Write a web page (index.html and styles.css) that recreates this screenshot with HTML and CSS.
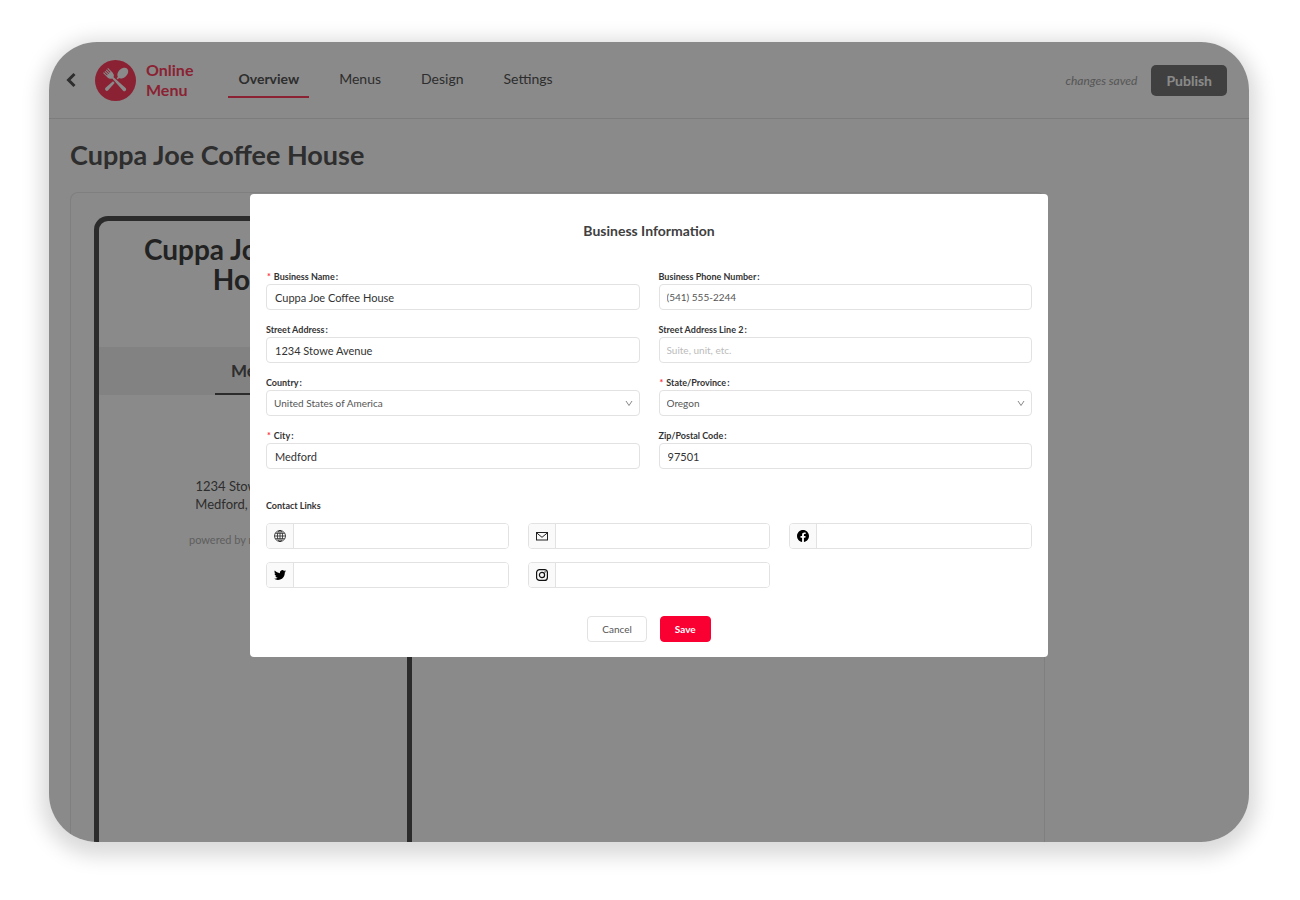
FILE: index.html
```html
<!DOCTYPE html>
<html lang="en">
<head>
  <meta charset="UTF-8">
  <meta name="viewport" content="width=device-width, initial-scale=1">
  <title>Online Menu - Cuppa Joe Coffee House</title>
  <link rel="stylesheet" href="styles.css">
</head>
<body>

  <div class="window">
    <header class="topbar">
      <a class="back" href="#" aria-label="Back">
        <svg width="10" height="16" viewBox="0 0 10 16"><path d="M8.5 2 L2.5 8 L8.5 14" fill="none" stroke="currentColor" stroke-width="3"/></svg>
      </a>
      <a class="brand" href="#">
        <svg width="41" height="41" viewBox="0 0 41 41">
          <circle cx="20.5" cy="20.5" r="20.5" fill="#ff4060"/>
          <g class="cutlery" transform="translate(2 2) scale(0.9)">
            <!-- Spoon -->
            <g transform="rotate(45 20.5 20.5)">
              <ellipse cx="20.5" cy="9" rx="5" ry="7"/>
              <path d="M19.7 15 h1.6 l1.2 19 a2 2 0 0 1 -4 0 z"/>
            </g>
            <!-- Fork -->
            <g transform="rotate(-45 20.5 20.5)">
              <path class="gap" d="M18.2 16 h4.6 l0.6 10 h-5.800 z"/>
              <path d="M16.600 5 h1.200 v5 h1 v-5 h1.200 v5 h1 v-5 h1.200 v5 h1 v-5 h1.200 v7 q0 3 -2.900 4.500 l1 18 a2 2 0 0 1 -4 0 l1 -18 q-2.900 -1.500 -2.900 -4.500 z"/>
            </g>
          </g>
        </svg>
        <span>Online<br>Menu</span>
      </a>
      <nav class="tabs">
        <a class="active" href="#">Overview</a>
        <a href="#">Menus</a>
        <a href="#">Design</a>
        <a href="#">Settings</a>
      </nav>
      <span class="status">changes saved</span>
      <button class="publish" type="button">Publish</button>
    </header>

    <main class="page">
      <h1>Cuppa Joe Coffee House</h1>
      <div class="card">
        <!-- Phone preview -->
        <div class="phone">
          <h2>Cuppa Joe Coffee House</h2>
          <div class="menu-bar"><span>Menu</span></div>
          <p class="address">1234 Stowe Avenue<br>Medford, OR 97501</p>
          <p class="powered">powered by <b>marketing360</b></p>
        </div>
      </div>
    </main>

    <!-- Business info dialog -->
    <div class="overlay">
      <form class="modal" role="dialog" aria-labelledby="modal-title">
        <h2 id="modal-title">Business Information</h2>
        <div class="fields">
          <div class="field">
            <label class="required" for="name">Business Name</label>
            <input id="name" type="text" value="Cuppa Joe Coffee House">
          </div>
          <div class="field">
            <label for="phone">Business Phone Number</label>
            <input class="compact" id="phone" type="tel" value="(541) 555-2244">
          </div>
          <div class="field">
            <label for="street">Street Address</label>
            <input id="street" type="text" value="1234 Stowe Avenue">
          </div>
          <div class="field">
            <label for="street2">Street Address Line 2</label>
            <input class="compact" id="street2" type="text" placeholder="Suite, unit, etc.">
          </div>
          <div class="field">
            <label for="country">Country</label>
            <div class="select">
              <select id="country"><option>United States of America</option></select>
              <svg width="8" height="8" viewBox="0 0 8 8"><path d="M1 2 L4 6.500 L7 2"/></svg>
            </div>
          </div>
          <div class="field">
            <label class="required" for="state">State/Province</label>
            <div class="select">
              <select id="state"><option>Oregon</option></select>
              <svg width="8" height="8" viewBox="0 0 8 8"><path d="M1 2 L4 6.500 L7 2"/></svg>
            </div>
          </div>
          <div class="field">
            <label class="required" for="city">City</label>
            <input id="city" type="text" value="Medford">
          </div>
          <div class="field">
            <label for="zip">Zip/Postal Code</label>
            <input id="zip" type="text" value="97501">
          </div>
        </div>

        <h3>Contact Links</h3>
        <div class="links">
          <div class="link">
            <label for="website" aria-label="Website">
              <svg width="12" height="12" viewBox="0 0 12 12" fill="none" stroke="#222" stroke-width="0.800">
                <circle cx="6" cy="6" r="5.500"/><ellipse cx="6" cy="6" rx="2.600" ry="5.500"/>
                <path d="M6 0.500 V11.500 M0.500 6 H11.500 M1.300 3.300 H10.700 M1.300 8.700 H10.700"/>
              </svg>
            </label>
            <input id="website" type="url">
          </div>
          <div class="link">
            <label for="email" aria-label="Email">
              <svg width="12" height="12" viewBox="0 0 12 12" fill="none" stroke="#222">
                <rect x="0.500" y="2.500" width="11" height="7.500"/><path d="M0.500 2.800 L6 7.300 L11.500 2.800"/>
              </svg>
            </label>
            <input id="email" type="email">
          </div>
          <div class="link">
            <label for="facebook" aria-label="Facebook">
              <svg width="12" height="12" viewBox="0 0 24 24"><path d="M24 12.073c0-6.627-5.373-12-12-12s-12 5.373-12 12c0 5.990 4.388 10.954 10.125 11.854v-8.385H7.078v-3.470h3.047V9.430c0-3.007 1.792-4.669 4.533-4.669 1.312 0 2.686.235 2.686.235v2.953H15.830c-1.491 0-1.956.925-1.956 1.874v2.250h3.328l-.532 3.470h-2.796v8.385C19.612 23.027 24 18.062 24 12.073z"/></svg>
            </label>
            <input id="facebook" type="url">
          </div>
          <div class="link">
            <label for="twitter" aria-label="Twitter">
              <svg width="12" height="12" viewBox="0 0 24 24"><path d="M23.953 4.570a10 10 0 01-2.825.775 4.958 4.958 0 002.163-2.723c-.951.555-2.005.959-3.127 1.184a4.920 4.920 0 00-8.384 4.482C7.690 8.095 4.067 6.130 1.640 3.162a4.822 4.822 0 00-.666 2.475c0 1.710.870 3.213 2.188 4.096a4.904 4.904 0 01-2.228-.616v.060a4.923 4.923 0 003.946 4.827 4.996 4.996 0 01-2.212.085 4.936 4.936 0 004.604 3.417 9.867 9.867 0 01-6.102 2.105c-.390 0-.779-.023-1.170-.067a13.995 13.995 0 007.557 2.209c9.053 0 13.998-7.496 13.998-13.985 0-.210 0-.420-.015-.630A9.935 9.935 0 0024 4.590z"/></svg>
            </label>
            <input id="twitter" type="url">
          </div>
          <div class="link">
            <label for="instagram" aria-label="Instagram">
              <svg width="12" height="12" viewBox="0 0 12 12" fill="none" stroke="#111" stroke-width="1.200">
                <rect x="0.600" y="0.600" width="10.800" height="10.800" rx="3"/><circle cx="6" cy="6" r="2.600"/>
                <circle cx="9.100" cy="2.900" r="0.700" fill="#111" stroke="none"/>
              </svg>
            </label>
            <input id="instagram" type="url">
          </div>
        </div>

        <div class="actions">
          <button type="button">Cancel</button>
          <button class="save" type="submit">Save</button>
        </div>
      </form>
    </div>
  </div>

</body>
</html>
```

FILE: styles.css
```css
/* Global Styling */
* {
  box-sizing: border-box;
}
body {
  margin: 0;
  padding: 42px 51px 58px 49px;
  background: #fff;
  color: #555;
  font-family: Lato, sans-serif;
}
h1, h2, h3, p {
  margin: 0;
}
a {
  color: inherit;
  text-decoration: none;
}
input, select, button {
  font-family: inherit;
}

/* App window */
.window {
  position: relative;
  display: flex;
  flex-direction: column;
  height: calc(100vh - 100px);
  min-height: 640px;
  border-radius: 48px;
  overflow: hidden;
  background: #fff;
  box-shadow: 0 6px 20px 8px rgba(0, 0, 0, 0.15);
}

/* Header */
.topbar {
  display: flex;
  align-items: center;
  height: 77px;
  flex-shrink: 0;
  padding: 0 22px 0 17px;
  border-bottom: 1px solid #e6e6e6;
}
.back {
  display: flex;
  width: 29px;
}
.brand {
  display: flex;
  align-items: center;
  gap: 10px;
  color: #ff4060;
  font-size: 16px;
  font-weight: bold;
  line-height: 20px;
}
.cutlery {
  fill: #fff;
}
.cutlery .gap {
  fill: #ff4060;
}
.tabs {
  display: flex;
  gap: 20px;
  margin-left: 35px;
  font-size: 14px;
  line-height: 20px;
}
.tabs a {
  padding: 7px 10px;
  border-bottom: 2px solid transparent;
}
.tabs .active {
  border-color: #ff4060;
  font-weight: bold;
}
.status {
  margin-left: auto;
  margin-right: 14px;
  color: #a0a0a0;
  font-size: 12px;
  font-style: italic;
}
.publish {
  height: 31px;
  padding: 0 15px;
  border: none;
  border-radius: 5px;
  background: #777;
  color: #fff;
  font-size: 14px;
  font-weight: bold;
}

/* Page */
.page {
  display: flex;
  flex-direction: column;
  flex: 1;
  min-height: 0;
  padding: 20px 21px 0;
}
.page h1 {
  font-size: 27px;
  line-height: 32px;
}
.card {
  flex: 1;
  min-height: 0;
  width: 100%;
  max-width: 975px;
  margin-top: 21px;
  padding: 23px;
  padding-bottom: 0;
  border: 1px solid #eaeaea;
  border-bottom: none;
  border-radius: 8px 8px 0 0;
}
.phone {
  width: 318px;
  max-width: 100%;
  height: 100%;
  border: 5px solid #505050;
  border-bottom: none;
  border-radius: 14px 14px 0 0;
  overflow: hidden;
  text-align: center;
}
.phone h2 {
  padding: 13px 40px 0;
  color: #404040;
  font-size: 28px;
  line-height: 30px;
}
.menu-bar {
  display: flex;
  justify-content: center;
  height: 48px;
  margin-top: 53px;
  background: #f0f0f0;
}
.menu-bar span {
  padding: 14px 16px 0;
  border-bottom: 2px solid #505050;
  font-size: 17px;
  font-weight: bold;
  line-height: 20px;
}
.address {
  margin-top: 82px;
  font-size: 13px;
  line-height: 18px;
}
.powered {
  margin-top: 19px;
  color: #b0b0b0;
  font-size: 11px;
  line-height: 16px;
}

/* Dialog */
.overlay {
  position: absolute;
  inset: 0;
  display: flex;
  justify-content: center;
  align-items: flex-start;
  padding: 152px 16px 16px;
  background: rgba(0, 0, 0, 0.46);
}
.modal {
  width: 100%;
  max-width: 798px;
  padding: 27px 16px 15px;
  border-radius: 4px;
  background: #fff;
  color: #333;
}
.modal h2 {
  color: #404040;
  font-size: 14px;
  line-height: 20px;
  text-align: center;
}
.fields {
  display: grid;
  grid-template-columns: 1fr 1fr;
  gap: 13px 19px;
  margin-top: 29px;
}
.field label, .modal h3 {
  display: block;
  font-size: 9px;
  font-weight: bold;
  line-height: 14px;
}
.field label::after {
  content: ":";
  margin-left: 1px;
}
.field .required::before {
  content: "*";
  margin: 0 3px 0 1px;
  color: #ff3040;
}
.field input, .select select {
  display: block;
  width: 100%;
  height: 26px;
  padding: 0 8px;
  border: 1px solid #e2e2e2;
  border-radius: 4px;
  background: #fff;
  color: #333;
  font-size: 11px;
}
.field .compact, .select select {
  padding: 0 7px;
  color: #555;
  font-size: 10px;
}
.field input::placeholder {
  color: #bbb;
}
.select {
  display: grid;
  align-items: center;
}
.select select, .select svg {
  grid-area: 1 / 1;
}
.select select {
  appearance: none;
}
.select svg {
  justify-self: end;
  margin-right: 7px;
  fill: none;
  stroke: #888;
  pointer-events: none;
}

/* Contact links */
.modal h3 {
  margin-top: 30px;
}
.links {
  display: grid;
  grid-template-columns: repeat(3, 1fr);
  gap: 13px 19px;
  margin-top: 10px;
}
.link {
  display: flex;
  height: 26px;
  border: 1px solid #e2e2e2;
  border-radius: 4px;
  overflow: hidden;
}
.link label {
  display: flex;
  align-items: center;
  justify-content: center;
  width: 27px;
  flex-shrink: 0;
  border-right: 1px solid #e2e2e2;
  background: #fafafa;
}
.link input {
  flex: 1;
  min-width: 0;
  padding: 0 8px;
  border: none;
  font-size: 11px;
}

/* Buttons */
.actions {
  display: flex;
  justify-content: center;
  gap: 13px;
  margin-top: 28px;
}
.actions button {
  height: 26px;
  padding: 0 14px;
  border: 1px solid #e2e2e2;
  border-radius: 4px;
  background: #fff;
  color: #555;
  font-size: 10px;
}
.actions .save {
  border-color: #fa0032;
  background: #fa0032;
  color: #fff;
  font-weight: bold;
}
```
